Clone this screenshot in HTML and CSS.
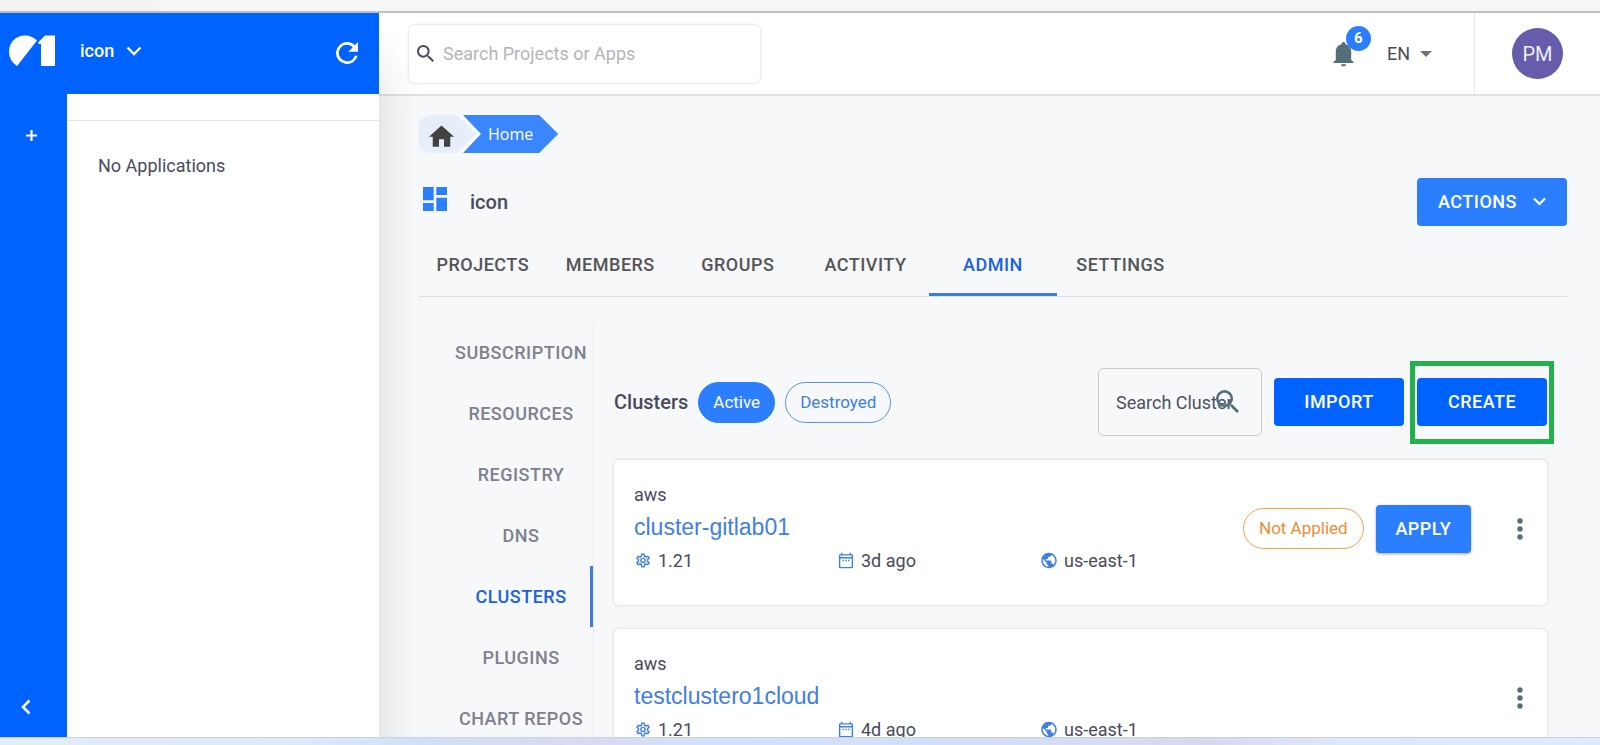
FILE: index.html
```html
<!DOCTYPE html>
<html lang="en">
<head>
<meta charset="utf-8">
<title>Clusters</title>
<link rel="stylesheet" href="styles.css">
</head>
<body>
<svg class="sprite" aria-hidden="true">
  <symbol id="gear" viewBox="0 0 24 24"><path fill="currentColor" d="M12 8a4 4 0 0 1 4 4 4 4 0 0 1-4 4 4 4 0 0 1-4-4 4 4 0 0 1 4-4m0 2a2 2 0 0 0-2 2 2 2 0 0 0 2 2 2 2 0 0 0 2-2 2 2 0 0 0-2-2m-2 12c-.25 0-.46-.18-.5-.42l-.37-2.65c-.63-.25-1.17-.59-1.69-.99l-2.49 1.01c-.22.08-.49 0-.61-.22l-2-3.46a.493.493 0 0 1 .12-.64l2.11-1.66L4.5 12l.07-1-2.11-1.63a.493.493 0 0 1-.12-.64l2-3.46c.12-.22.39-.31.61-.22l2.49 1c.52-.39 1.06-.73 1.69-.98l.37-2.65c.04-.24.25-.42.5-.42h4c.25 0 .46.18.5.42l.37 2.65c.63.25 1.17.59 1.69.98l2.49-1c.22-.09.49 0 .61.22l2 3.46c.13.22.07.49-.12.64L19.43 11l.07 1-.07 1 2.11 1.63c.19.15.25.42.12.64l-2 3.46c-.12.22-.39.31-.61.22l-2.49-1c-.52.39-1.06.73-1.69.98l-.37 2.65c-.04.24-.25.42-.5.42h-4m1.25-18-.37 2.61c-1.2.25-2.26.89-3.03 1.78L5.44 7.35l-.75 1.3L6.8 10.2a5.55 5.55 0 0 0 0 3.6l-2.12 1.56.75 1.3 2.43-1.04c.77.88 1.82 1.52 3.01 1.76l.37 2.62h1.52l.37-2.61c1.19-.25 2.24-.89 3.01-1.77l2.43 1.04.75-1.3-2.12-1.55c.4-1.17.4-2.44 0-3.61l2.11-1.55-.75-1.3-2.41 1.04a5.42 5.42 0 0 0-3.03-1.77L12.75 4h-1.5z"/></symbol>
  <symbol id="calendar" viewBox="0 0 24 24"><path fill="currentColor" d="M7 11h2v2H7v-2m4 0h2v2h-2v-2m4 0h2v2h-2v-2M20 3h-1V1h-2v2H7V1H5v2H4a2 2 0 0 0-2 2v16a2 2 0 0 0 2 2h16a2 2 0 0 0 2-2V5a2 2 0 0 0-2-2m0 18H4V9h16v12m0-14H4V5h16v2z"/></symbol>
  <symbol id="globe" viewBox="1 1 22 22"><path fill="currentColor" d="M12 2C6.480 2 2 6.480 2 12s4.480 10 10 10 10-4.480 10-10S17.520 2 12 2zm-1 17.930c-3.950-.49-7-3.850-7-7.930 0-.62.08-1.210.21-1.790L9 15v1c0 1.100.9 2 2 2v1.930zm6.900-2.540c-.26-.81-1-1.390-1.900-1.390h-1v-3c0-.55-.45-1-1-1H8v-2h2c.55 0 1-.45 1-1V7h2c1.100 0 2-.9 2-2v-.41c2.930 1.190 5 4.060 5 7.410 0 2.080-.8 3.970-2.100 5.390z"/></symbol>
  <symbol id="search" viewBox="3 3 17.500 17.500"><path fill="currentColor" d="M15.500 14h-.79l-.28-.27A6.471 6.471 0 0 0 16 9.500 6.500 6.500 0 1 0 9.500 16c1.610 0 3.090-.59 4.230-1.570l.27.28v.79l5 4.990L20.490 19l-4.990-5zm-6 0C7.010 14 5 11.990 5 9.500S7.010 5 9.500 5 14 7.010 14 9.500 11.990 14 9.500 14z"/></symbol>
  <symbol id="dots" viewBox="0 0 6 22"><g fill="currentColor"><circle cx="3" cy="3" r="2.700"/><circle cx="3" cy="11" r="2.700"/><circle cx="3" cy="19" r="2.700"/></g></symbol>
</svg>

<div class="window-edge"></div>
<div class="app">
  <aside class="sidebar">
    <div class="brand">
      <svg class="logo" viewBox="0 0 46 32" role="img" aria-label="Home"><path fill="#fff" d="M8 31A17 17 0 0 1 0 17C0 7 7 .5 16 .5c5 0 9 2 12 5zM36 .5h10V31H32V9h-2.500V7z"/></svg>
      <button class="org" type="button">icon
        <svg width="16" height="10" viewBox="0 0 16 10"><path d="M1.500 1.500 8 8l6.500-6.500" fill="none" stroke="currentColor" stroke-width="2.400"/></svg>
      </button>
      <button class="refresh" type="button" aria-label="Refresh">
        <svg width="22" height="22" viewBox="4 4 16 16"><path fill="currentColor" d="M17.650 6.350A7.958 7.958 0 0 0 12 4a8 8 0 1 0 7.730 10h-2.080A5.990 5.990 0 0 1 12 18a6 6 0 1 1 0-12c1.660 0 3.140.69 4.220 1.780L13 11h7V4l-2.350 2.350z"/></svg>
      </button>
    </div>
    <div class="sidebar-body">
      <div class="rail">
        <button type="button" aria-label="Add"><svg width="11" height="11" viewBox="0 0 11 11"><path d="M5.500 0v11M0 5.500h11" stroke="currentColor" stroke-width="2.200"/></svg></button>
        <button type="button" aria-label="Collapse"><svg width="10" height="16" viewBox="0 0 10 16"><path d="M8.500 1.500 2 8l6.500 6.500" fill="none" stroke="currentColor" stroke-width="2.500"/></svg></button>
      </div>
      <div class="apps"><p>No Applications</p></div>
    </div>
  </aside>

  <div class="page">
    <header class="topbar">
      <label class="find">
        <svg width="17" height="17"><use href="#search"/></svg>
        <input type="text" placeholder="Search Projects or Apps" aria-label="Search Projects or Apps">
      </label>
      <button class="bell" type="button" aria-label="Notifications">
        <svg width="21" height="26" viewBox="0 0 21 26"><path fill="#546e7a" d="M10.500 1c1.200 0 2 .8 2 1.700v.6c3.700.9 5.700 4 5.700 7.600v8l2.300 2v1H.5v-1l2.300-2v-8c0-3.600 2-6.700 5.700-7.600v-.6c0-.9.800-1.700 2-1.700zM8 23.200h5a2.500 2.200 0 0 1-5 0z"/></svg>
        <span class="badge">6</span>
      </button>
      <button class="lang" type="button">EN
        <svg width="12" height="6" viewBox="0 0 12 6"><path fill="#757575" d="M0 0h12L6 6z"/></svg>
      </button>
      <div class="account"><button class="avatar" type="button">PM</button></div>
    </header>

    <main class="content">
      <nav class="crumbs" aria-label="Breadcrumb">
        <a class="crumb-root" href="#" aria-label="Start"><svg width="25" height="22" viewBox="2 3 20 17"><path fill="#424242" d="M10 20v-6h4v6h5v-8h3L12 3 2 12h3v8z"/></svg></a>
        <a class="crumb" href="#">Home</a>
      </nav>

      <div class="title-row">
        <svg class="title-icon" width="24" height="24" viewBox="3 3 18 18"><path fill="#2b7fff" d="M3 13h8V3H3v10zm0 8h8v-6H3v6zm10 0h8V11h-8v10zm0-18v6h8V3h-8z"/></svg>
        <h1>icon</h1>
        <button class="btn btn-light actions" type="button">ACTIONS
          <svg width="13" height="9" viewBox="0 0 13 9"><path d="M1 1.500 6.500 7 12 1.500" fill="none" stroke="currentColor" stroke-width="2.200"/></svg>
        </button>
      </div>

      <nav class="tabs">
        <a href="#">PROJECTS</a><a href="#">MEMBERS</a><a href="#">GROUPS</a><a href="#">ACTIVITY</a><a class="current" href="#">ADMIN</a><a href="#">SETTINGS</a>
      </nav>

      <div class="admin">
        <nav class="side-tabs">
          <a href="#">SUBSCRIPTION</a><a href="#">RESOURCES</a><a href="#">REGISTRY</a><a href="#">DNS</a><a class="current" href="#">CLUSTERS</a><a href="#">PLUGINS</a><a href="#">CHART REPOS</a>
        </nav>
        <section class="clusters">
          <div class="toolbar">
            <h2>Clusters</h2>
            <button class="pill pill-on" type="button">Active</button>
            <button class="pill pill-off" type="button">Destroyed</button>
            <label class="cluster-search">
              <input type="text" placeholder="Search Cluster" aria-label="Search Cluster">
              <svg width="23" height="23"><use href="#search"/></svg>
            </label>
            <button class="btn btn-strong" type="button">IMPORT</button>
            <button class="btn btn-strong highlighted" type="button">CREATE</button>
          </div>

          <article class="card">
            <div class="info">
              <p>aws</p>
              <h3><a href="#">cluster-gitlab01</a></h3>
              <ul>
                <li><svg><use href="#gear"/></svg>1.21</li>
                <li><svg><use href="#calendar"/></svg>3d ago</li>
                <li><svg><use href="#globe"/></svg>us-east-1</li>
              </ul>
            </div>
            <span class="pill pill-warn">Not Applied</span>
            <button class="btn btn-light apply" type="button">APPLY</button>
            <button class="more" type="button" aria-label="More"><svg width="6" height="22"><use href="#dots"/></svg></button>
          </article>

          <article class="card">
            <div class="info">
              <p>aws</p>
              <h3><a href="#">testclustero1cloud</a></h3>
              <ul>
                <li><svg><use href="#gear"/></svg>1.21</li>
                <li><svg><use href="#calendar"/></svg>4d ago</li>
                <li><svg><use href="#globe"/></svg>us-east-1</li>
              </ul>
            </div>
            <button class="more" type="button" aria-label="More"><svg width="6" height="22"><use href="#dots"/></svg></button>
          </article>
        </section>
      </div>
    </main>
  </div>
</div>
<div class="taskbar"></div>
</body>
</html>
```

FILE: styles.css
```css
* { box-sizing: border-box; }

body {
  margin: 0;
  height: 100vh;
  display: flex;
  flex-direction: column;
  overflow: hidden;
  font-family: Roboto, "Liberation Sans", sans-serif;
  font-size: 18px;
  line-height: 24px;
  color: #4a4a5c;
  background: #f6f8fa;
}

h1, h2, h3, p, ul { margin: 0; padding: 0; }
a { color: inherit; text-decoration: none; }
svg { display: block; flex: none; }

button, input {
  font: inherit;
  color: inherit;
  background: none;
  border: 0;
  padding: 0;
  margin: 0;
}

.sprite { position: absolute; width: 0; height: 0; }

.window-edge {
  flex: none;
  height: 13px;
  background: linear-gradient(90deg, #f4f2f2 158px, #f7f7f7 162px);
  border-bottom: 2px solid #bfbfbf;
}

.app { flex: 1; min-height: 0; display: flex; overflow: hidden; }

.taskbar {
  flex: none;
  height: 8px;
  border-top: 1px solid #c8d2e2;
  background: linear-gradient(90deg, #e2edf8 0%, #dfeaf8 18%, #d2dff7 26%, #d8daf0 37%, #d5e1f8 44%, #d3dff6 58%, #d8daee 76%, #dde9f9 84%, #dfeafa 100%);
}

/* Sidebar */

.sidebar {
  position: relative;
  z-index: 1;
  flex: none;
  width: 379px;
  display: flex;
  flex-direction: column;
  background: #fff;
  box-shadow: 0 50px 44px rgba(0, 0, 0, 0.14);
}

.brand {
  flex: none;
  height: 81px;
  display: flex;
  align-items: center;
  padding: 0 21px 6px 9px;
  color: #fff;
  background: #0062ff;
}

.logo { width: 46px; height: 32px; }

.org {
  display: flex;
  align-items: center;
  gap: 12px;
  margin-left: 25px;
  font-weight: 500;
}

.refresh { margin-left: auto; padding-top: 5px; }

.sidebar-body { flex: 1; min-height: 0; display: flex; }

.rail {
  width: 67px;
  display: flex;
  flex-direction: column;
  justify-content: space-between;
  align-items: flex-start;
  padding: 36px 0 22px 21px;
  color: #fff;
  background: #0062ff;
}

.rail button:first-child { padding-left: 5px; }

.apps { flex: 1; padding-top: 26px; }

.apps p { border-top: 1px solid #e3e5e8; padding: 33px 31px; }

/* Top bar */

.page { flex: 1; min-width: 0; display: flex; flex-direction: column; }

.topbar {
  flex: none;
  height: 83px;
  display: flex;
  align-items: center;
  padding-left: 29px;
  background: #fff;
  border-bottom: 2px solid #dfe0e2;
}

.find {
  width: 353px;
  height: 60px;
  display: flex;
  align-items: center;
  gap: 9px;
  padding: 0 8px;
  background: #fff;
  border: 1px solid #ececee;
  border-radius: 7px;
  box-shadow: 0 0 3px rgba(0, 0, 0, 0.08);
}

.find input { flex: 1; min-width: 0; }
.find input::placeholder { color: #b4b5ba; opacity: 1; }

.bell { position: relative; margin-left: auto; }

.badge {
  position: absolute;
  left: 13px;
  top: -15px;
  width: 25px;
  height: 25px;
  border-radius: 50%;
  font-size: 15px;
  font-weight: 700;
  line-height: 25px;
  color: #fff;
  background: #2b7fff;
}

.lang { display: flex; align-items: center; gap: 10px; margin: 0 42px 0 33px; }

.account {
  align-self: stretch;
  width: 126px;
  display: grid;
  place-items: center;
  border-left: 1px solid #e6e8ea;
}

.avatar {
  width: 51px;
  height: 51px;
  border-radius: 50%;
  font-size: 20px;
  color: #eeeef8;
  background: #655dab;
}

/* Page content */

.content {
  flex: 1;
  min-height: 0;
  display: flex;
  flex-direction: column;
  padding: 19px 33px 0 40px;
}

.crumbs { display: flex; height: 38px; flex: none; }

.crumb-root {
  width: 57px;
  padding: 10px 0 0 10px;
  background: #e6eefa;
  border-radius: 12px 0 0 12px;
  clip-path: polygon(0 0, 38px 0, 57px 50%, 38px 100%, 0 100%);
}

.crumb {
  margin-left: -13px;
  padding: 0 25px;
  font-family: "Open Sans", sans-serif;
  font-size: 16px;
  line-height: 38px;
  color: #fff;
  background: #3a86ff;
  clip-path: polygon(0 0, calc(100% - 19px) 0, 100% 50%, calc(100% - 19px) 100%, 0 100%, 18px 50%);
}

.title-row {
  flex: none;
  display: flex;
  align-items: center;
  height: 47px;
  margin-top: 25px;
  padding-left: 4px;
}

.title-icon { margin-bottom: 6px; }

h1, h2 { font-size: 20px; font-weight: 500; }
h1 { margin-left: 23px; }

.btn {
  height: 48px;
  border-radius: 4px;
  font-weight: 500;
  letter-spacing: 0.5px;
  color: #fff;
}

.btn-light { background: #2b7fff; }
.btn-strong { width: 130px; background: #0062ff; }

.actions {
  display: flex;
  align-items: center;
  gap: 16px;
  margin-left: auto;
  padding: 0 21px;
}

.tabs {
  flex: none;
  display: flex;
  height: 72px;
  border-bottom: 1px solid #dcdfe3;
  color: #555557;
  font-weight: 500;
}

.tabs a {
  flex: 0 0 calc(100% / 9);
  padding-top: 28px;
  text-align: center;
  letter-spacing: 0.5px;
  border-bottom: 3px solid transparent;
}

.tabs .current { color: #1c62de; border-bottom-color: #3d7ce0; }

.admin { flex: 1; min-height: 0; display: flex; padding: 25px 20px 0 30px; }

.side-tabs {
  flex: none;
  width: 145px;
  border-right: 1px solid #e8eaed;
  color: #80808e;
  font-weight: 500;
}

.side-tabs a {
  display: block;
  line-height: 61px;
  text-align: center;
  white-space: nowrap;
  letter-spacing: 0.5px;
  border: solid transparent;
  border-width: 0 3px;
}

.side-tabs .current { color: #1c62de; border-right-color: #3d7ce0; }

.clusters { flex: 1; min-width: 0; padding: 46px 0 0 20px; }

.toolbar { display: flex; align-items: center; height: 68px; gap: 10px; }

.pill {
  height: 41px;
  padding: 0 14px;
  border: 1px solid #2b7fff;
  border-radius: 21px;
  line-height: 39px;
  font-size: 17px;
  white-space: nowrap;
}

.pill-on { color: #fff; background: #2b7fff; }
.pill-off { color: #4080e0; border-color: #5a93e6; }
.pill-warn { color: #ee8c33; border-color: #f0a24e; padding: 0 15px; }

.cluster-search {
  position: relative;
  width: 164px;
  height: 68px;
  margin-left: auto;
  margin-right: 2px;
  border: 1px solid #c9ccd0;
  border-radius: 5px;
}

.cluster-search input { width: 100%; height: 100%; padding: 0 17px; }
.cluster-search input::placeholder { color: #505061; opacity: 1; }
.cluster-search svg { position: absolute; right: 22px; top: 21px; color: #546e7a; }

.highlighted { position: relative; margin-left: 3px; }

.highlighted::after {
  content: "";
  position: absolute;
  inset: -17px -7px -18px;
  border: 5px solid #22b14c;
}

.card {
  display: flex;
  align-items: center;
  height: 145px;
  margin-top: 24px;
  padding: 0 24px 8px 20px;
  background: #fff;
  border-radius: 5px;
  box-shadow: 0 0 3px rgba(40, 60, 80, 0.22);
}

.info { flex: 1; }
.info p { font-size: 18px; }

.info h3 {
  font-family: "Liberation Sans", Arial, sans-serif;
  font-size: 23px;
  font-weight: 400;
  line-height: 40px;
  color: #3f80e0;
}

.info ul { display: grid; grid-template-columns: repeat(3, 203px); list-style: none; }
.info li { display: flex; align-items: center; gap: 6px; line-height: 28px; }
.info li svg { width: 18px; height: 17px; color: #3f80e0; }

.apply {
  width: 96px;
  margin: 0 42px 0 12px;
  box-shadow: 0 1px 3px rgba(0, 0, 0, 0.35);
}

.more { padding: 0 0 0 4px; color: #546e7a; }
```
